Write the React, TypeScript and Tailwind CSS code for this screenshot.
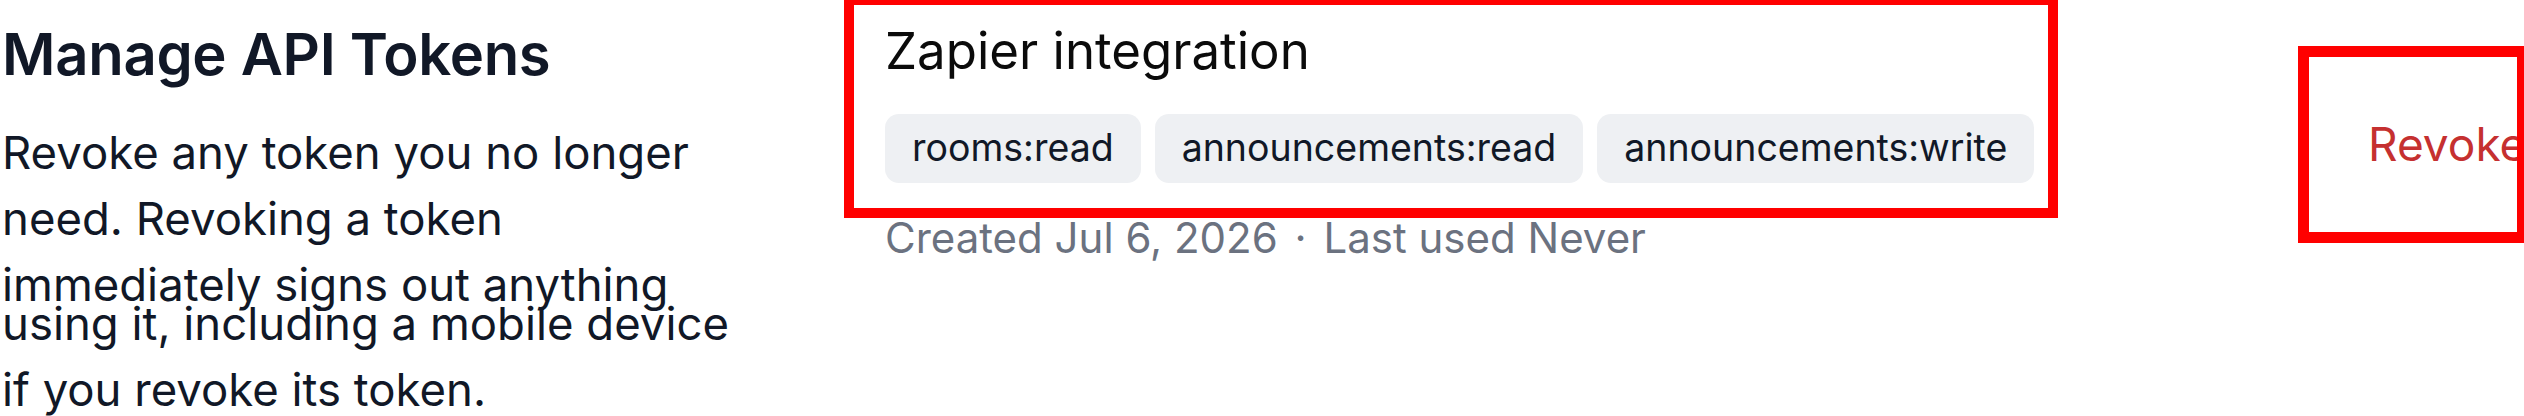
const scopes = ['rooms:read', 'announcements:read', 'announcements:write'];

// Description is broken into fixed lines; the fourth line sits tight under the third.
const intro = [
  { text: 'Revoke any token you no longer', cls: '' },
  { text: 'need. Revoking a token', cls: '' },
  { text: 'immediately signs out anything', cls: '' },
  { text: 'using it, including a mobile device', cls: '-mt-[27px]' },
  { text: 'if you revoke its token.', cls: '' },
];

export default function App() {
  return (
    <div className="flex items-start w-[2524px] h-[416px] overflow-hidden bg-white font-['Inter',sans-serif]">
      {/* Left - heading and help text */}
      <div className="w-[854px] shrink-0 pt-[25px] pl-[2px] text-[#111827]">
        <h2 className="text-[58px] leading-[58px] font-semibold tracking-[-0.3px]">Manage API Tokens</h2>
        <div className="mt-[37px] text-[45.5px] leading-[66px]">
          {intro.map((line) => (
            <span key={line.text} className={`block whitespace-nowrap ${line.cls}`}>
              {line.text}
            </span>
          ))}
        </div>
      </div>

      {/* Right - token row */}
      <div className="flex-1 flex justify-between items-start">
        <div>
          <div className="mt-[5px] w-[1194px] h-[203px] pt-[11px] pl-[31px] outline-[10px] outline-solid outline-[#ff0000]">
            <div className="text-[51px] leading-[70px] text-[#0b0b0b]">Zapier integration</div>
            <div className="mt-[28px] flex gap-[14px]">
              {scopes.map((scope) => (
                <span
                  key={scope}
                  className="h-[69px] px-[27px] flex items-center rounded-[14px] bg-[#eef0f3] text-[37.5px] text-[#111827] whitespace-nowrap"
                >
                  {scope}
                </span>
              ))}
            </div>
          </div>
          <div className="pl-[31px] text-[42px] leading-[60px] text-[#6b7280] whitespace-nowrap">
            Created Jul 6, 2026
            <span className="mx-[5px]"> · </span>
            Last used Never
          </div>
        </div>

        <button className="mt-[57px] mr-[7px] w-[208px] h-[175px] shrink-0 flex items-center pl-[59px] overflow-hidden outline-[11px] outline-solid outline-[#ff0000] text-[46px] text-[#c53030] whitespace-nowrap">
          Revoke
        </button>
      </div>
    </div>
  );
}
